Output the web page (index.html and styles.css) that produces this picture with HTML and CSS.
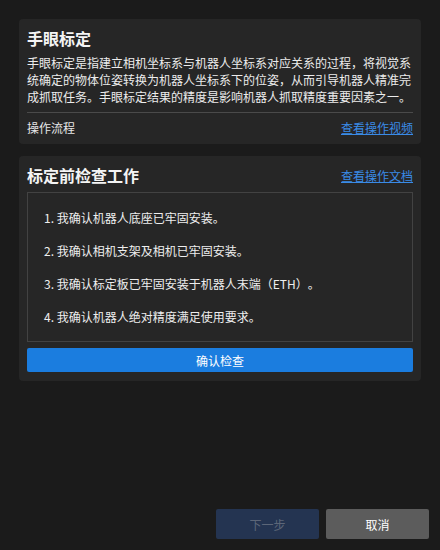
FILE: index.html
```html
<!DOCTYPE html>
<html lang="zh-CN">
<head>
    <meta charset="UTF-8">
    <title>手眼标定</title>
    <link rel="stylesheet" href="styles.css">
</head>
<body>
    <div class="page">
        <section class="card">
            <h3 class="card-title">手眼标定</h3>
            <p class="intro">手眼标定是指建立相机坐标系与机器人坐标系对应关系的过程，将视觉系统确定的物体位姿转换为机器人坐标系下的位姿，从而引导机器人精准完成抓取任务。手眼标定结果的精度是影响机器人抓取精度重要因素之一。</p>
            <div class="card-foot">
                <span>操作流程</span>
                <a href="#" class="link">查看操作视频</a>
            </div>
        </section>

        <section class="card">
            <div class="card-head">
                <h3 class="card-title">标定前检查工作</h3>
                <a href="#" class="link">查看操作文档</a>
            </div>
            <div class="checklist">
                <p>1. 我确认机器人底座已牢固安装。</p>
                <p>2. 我确认相机支架及相机已牢固安装。</p>
                <p>3. 我确认标定板已牢固安装于机器人末端（ETH）。</p>
                <p>4. 我确认机器人绝对精度满足使用要求。</p>
            </div>
            <button class="btn-confirm">确认检查</button>
        </section>

        <div class="footer">
            <button class="btn btn-next" disabled>下一步</button>
            <button class="btn btn-cancel">取消</button>
        </div>
    </div>
</body>
</html>
```

FILE: styles.css
```css
body{
    margin:0;
    padding:0;
    background-color: #1b1b1b;
    font-family: "Noto Sans CJK SC", "Noto Sans", sans-serif;
    color: #e6e6e6;
    text-spacing-trim: space-all;
}
.page{
    height: 550px;
    box-sizing: border-box;
    padding: 19px 19px 11px 19px;
    display: flex;
    flex-direction: column;
    gap: 12px;
}
.card{
    background-color: #262626;
    border-radius: 4px;
    padding: 8px 8px 6px 8px;
}
.card-title{
    margin: 0;
    font-size: 16px;
    line-height: 22px;
    font-weight: bold;
    color: #f4f4f4;
}
.intro{
    margin: 5px 0 0 0;
    font-size: 12px;
    line-height: 17px;
    color: #ececec;
}
.card-foot{
    margin-top: 7px;
    border-top: 1px solid #4a4a4a;
    padding-top: 5px;
    display: flex;
    justify-content: space-between;
    align-items: center;
    font-size: 12px;
    line-height: 20px;
}
.link{
    color: #3a8be6;
    font-size: 12px;
    text-decoration: underline;
}
.card-head{
    display: flex;
    justify-content: space-between;
    align-items: center;
}
.checklist{
    margin-top: 6px;
    border: 1px solid #424242;
    padding: 16px 16px;
    display: flex;
    flex-direction: column;
    gap: 16px;
}
.checklist p{
    margin: 0;
    font-size: 12px;
    line-height: 17px;
    color: #eeeeee;
}
.btn-confirm{
    display: block;
    width: 100%;
    margin-top: 6px;
    margin-bottom: 3px;
    height: 24px;
    border: 0;
    border-radius: 2px;
    background-color: #1b7ddf;
    color: #ffffff;
    font-family: inherit;
    font-size: 12px;
}
.footer{
    margin-top: auto;
    margin-right: -8px;
    display: flex;
    justify-content: flex-end;
    gap: 7px;
}
.btn{
    width: 103px;
    height: 30px;
    border: 0;
    border-radius: 2px;
    font-family: inherit;
    font-size: 12px;
}
.btn-next{
    background-color: #243451;
    color: #5c6678;
}
.btn-cancel{
    background-color: #5c5c5c;
    color: #ffffff;
}
```
